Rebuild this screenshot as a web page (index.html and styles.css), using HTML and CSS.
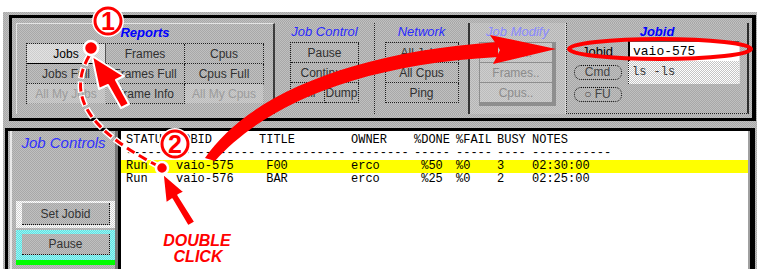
FILE: index.html
```html
<!DOCTYPE html>
<html lang="en">
<head>
    <meta charset="UTF-8">
    <meta name="viewport" content="width=device-width, initial-scale=1.0">
    <title>Rush Jobs - double click a jobid</title>
    <link rel="stylesheet" href="styles.css">
</head>
<body>
<div class="page">
    <div class="window">
        <div class="toolbar">
            <div class="group reports">
                <h3 class="title strong">Reports</h3>
                <div class="grid cols3">
                    <button class="btn on">Jobs</button>
                    <button class="btn">Frames</button>
                    <button class="btn">Cpus</button>
                    <button class="btn">Jobs Full</button>
                    <button class="btn">Frames Full</button>
                    <button class="btn">Cpus Full</button>
                    <button class="btn off">All My Jobs</button>
                    <button class="btn">Frame Info</button>
                    <button class="btn off">All My Cpus</button>
                </div>
            </div>
            <div class="group jobctl">
                <h3 class="title">Job Control</h3>
                <div class="grid cols2">
                    <button class="btn span2">Pause</button>
                    <button class="btn span2">Continue</button>
                    <button class="btn">Kill</button>
                    <button class="btn">Dump</button>
                </div>
            </div>
            <div class="group network">
                <h3 class="title">Network</h3>
                <div class="grid cols1">
                    <button class="btn">All Jobs</button>
                    <button class="btn">All Cpus</button>
                    <button class="btn">Ping</button>
                </div>
            </div>
            <div class="group jobmodify">
                <h3 class="title faint">Job Modify</h3>
                <div class="grid cols1 dim">
                    <button class="btn">Jobs..</button>
                    <button class="btn">Frames..</button>
                    <button class="btn">Cpus..</button>
                </div>
            </div>
            <div class="group jobid">
                <h3 class="title strong">Jobid</h3>
                <div class="jobid-form">
                    <span class="label">Jobid</span>
                    <span class="field">vaio-575</span>
                    <span class="pill">Cmd</span>
                    <span class="field cmd">ls -ls</span>
                    <span class="pill">&#9675; FU</span>
                    <span></span>
                </div>
            </div>
        </div>

        <div class="main">
            <div class="side">
                <h3 class="side-title">Job Controls</h3>
                <div class="slot light"><button class="sbtn">Set Jobid</button></div>
                <div class="slot cyan"><button class="sbtn">Pause</button></div>
                <div class="slot green"></div>
            </div>
            <div class="list">
                <div class="row"><span>STATUS</span><span>JOBID</span><span>TITLE</span><span>OWNER</span><span>%DONE</span><span>%FAIL</span><span>BUSY</span><span>NOTES</span></div>
                <div class="row"><span>------</span><span>-----------</span><span>------------</span><span>--------</span><span>-----</span><span>-----</span><span>----</span><span>-----------</span></div>
                <div class="row sel"><span>Run</span><span>vaio-575</span><span> F00</span><span>erco</span><span> %50</span><span>%0</span><span>3</span><span>02:30:00</span></div>
                <div class="row"><span>Run</span><span>vaio-576</span><span> BAR</span><span>erco</span><span> %25</span><span>%0</span><span>2</span><span>02:25:00</span></div>
            </div>
        </div>
    </div>

    <!-- red tutorial marks drawn over the screenshot -->
    <svg class="marks" width="762" height="269" viewBox="0 0 762 269">
        <path d="M89,56 C64,100 96,134 160,167" fill="none" stroke="#fff" stroke-width="6" stroke-dasharray="11 3" stroke-dashoffset="1"/>
        <path d="M89,56 C64,100 96,134 160,167" fill="none" stroke="#f00" stroke-width="3" stroke-dasharray="9 5"/>

        <path d="M205,158 C245,100 340,53 498,42 L498,57 C352,65 262,108 215,161 Z" fill="#f00"/>
        <polygon points="490,35 556,49 493,64 500,50" fill="#f00"/>

        <ellipse cx="660" cy="49" rx="91" ry="10" fill="none" stroke="#f00" stroke-width="4"/>

        <circle cx="91" cy="48" r="7" fill="#f00" stroke="#fff" stroke-width="2.5"/>
        <circle cx="162" cy="168" r="6" fill="#f00" stroke="#fff" stroke-width="2.5"/>

        <polygon points="92,56 124,76 116,80 129,104 121,108 108,85 99,89" fill="#f00" stroke="#fff" stroke-width="2" stroke-linejoin="round"/>
        <polygon points="163,174 184,192 178,195 195,222 188,226 172,199 166,203" fill="#f00" stroke="#fff" stroke-width="1.5" stroke-linejoin="round"/>

        <circle cx="108" cy="21" r="13" fill="#fff" stroke="#fff" stroke-width="6"/>
        <circle cx="108" cy="21" r="13" fill="#fff" stroke="#f00" stroke-width="3"/>
        <text class="num" x="108" y="30">1</text>

        <circle cx="175" cy="144" r="13" fill="#fff" stroke="#fff" stroke-width="6"/>
        <circle cx="175" cy="144" r="13" fill="#fff" stroke="#f00" stroke-width="3"/>
        <text class="num" x="175" y="153">2</text>

        <text class="dbl" x="197" y="246">DOUBLE</text>
        <text class="dbl" x="198" y="262">CLICK</text>
    </svg>
</div>
</body>
</html>
```

FILE: styles.css
```css
body {
    margin: 0;
    background: #fff;
    font-family: "Liberation Sans", Arial, sans-serif;
}
.page {
    position: relative;
    width: 762px;
    height: 269px;
    overflow: hidden;
}

/* dithered motif grey, like the old X11 app */
.window,
.group,
.btn,
.sbtn {
    background: repeating-conic-gradient(#a8a8a8 0 25%, #c0c0c0 0 50%) 0 0 / 2px 2px;
}
.window {
    margin: 12px 0 0 3px;
    width: 754px;
    height: 257px;
    display: flex;
    flex-direction: column;
}

/* top toolbar */
.toolbar {
    margin: 3px 1px 0 6px;
    border: 3px solid #000;
    border-right-width: 4px;
    padding: 5px 3px 4px 4px;
    height: 91px;
    display: flex;
}
.group {
    box-sizing: border-box;
    height: 91px;
    display: flex;
    flex-direction: column;
    align-items: center;
}
.reports {
    width: 259px;
    border-left: 1px solid #e4e4e4;
    border-top: 1px solid #e4e4e4;
    border-right: 2px solid #3c3c3c;
}
.jobctl {
    width: 100px;
    border-right: 1px dotted #222;
}
.network {
    width: 95px;
    border-right: 2px solid #333;
}
.jobmodify {
    width: 96px;
    background: repeating-conic-gradient(#b4b4b4 0 25%, #cacaca 0 50%) 0 0 / 2px 2px;
    border-right: 1px solid #d8d8d8;
}
.jobid {
    width: 183px;
    border-left: 1px dotted #222;
    border-bottom: 1px dotted #222;
    border-right: 2px solid #2c2c2c;
}
.title {
    margin: 0;
    height: 19px;
    font: italic 13px/18px "Liberation Sans", Arial, sans-serif;
    color: #2a2aff;
}
.title.strong {
    font-weight: bold;
    color: #0000ff;
}
.title.faint {
    color: #8a8aff;
}

.grid {
    display: grid;
    border-top: 1px dotted #1c1c1c;
    border-left: 1px dotted #1c1c1c;
}
.cols3 { grid-template-columns: repeat(3, 79px); }
.cols2 { grid-template-columns: repeat(2, 34px); }
.cols1 { grid-template-columns: 73px; }
.span2 { grid-column: span 2; }

.btn {
    height: 20px;
    margin: 0;
    padding: 0;
    border: 0;
    border-right: 1px dotted #1c1c1c;
    border-bottom: 1px dotted #1c1c1c;
    font: 12px "Liberation Sans", Arial, sans-serif;
    color: #303030;
    white-space: nowrap;
    overflow: hidden;
}
.btn.on {
    background: repeating-conic-gradient(#cdcdcd 0 25%, #e2e2e2 0 50%) 0 0 / 2px 2px;
    border-right: 1px solid #555;
    border-bottom: 1px solid #000;
    color: #000;
}
.btn.off {
    background: repeating-conic-gradient(#bababa 0 25%, #cdcdcd 0 50%) 0 0 / 2px 2px;
    border-color: #9a9a9a;
    color: #9c9c9c;
}
.dim {
    border-color: #8e8e8e;
    border-style: solid;
}
.dim .btn {
    background: repeating-conic-gradient(#bcbcbc 0 25%, #cecece 0 50%) 0 0 / 2px 2px;
    border-color: #8e8e8e;
    border-style: solid;
    color: #8c8c8c;
}

/* jobid entry */
.jobid-form {
    display: grid;
    grid-template-columns: 61px 112px;
    grid-template-rows: 20px 23px 20px;
    align-self: stretch;
    margin-top: -1px;
}
.label {
    align-self: center;
    text-align: center;
    font-size: 13px;
    color: #000;
}
.field {
    box-sizing: border-box;
    background: #fff;
    border-left: 2px solid #000;
    border-top: 1px solid #555;
    border-right: 1px solid #ddd;
    padding-left: 3px;
    font: 13px/19px "Liberation Mono", "Courier New", monospace;
    color: #000;
}
.field.cmd {
    background: repeating-conic-gradient(#c4c4c4 0 25%, #fff 0 50%) 0 0 / 2px 2px;
    border-left: 1px dotted #222;
    border-top: 0;
    font-size: 12px;
    line-height: 22px;
    color: #3a3a3a;
}
.pill {
    align-self: center;
    justify-self: center;
    box-sizing: border-box;
    width: 48px;
    height: 15px;
    border: 1px dotted #111;
    border-radius: 7px;
    text-align: center;
    font-size: 12px;
    line-height: 13px;
    color: #444;
}

/* lower part: job controls and the jobs list */
.main {
    margin: 7px 2px 0 2px;
    border: 3px solid #000;
    border-right-width: 5px;
    border-bottom: 0;
    flex: 1;
    display: flex;
    min-height: 0;
}
.side {
    width: 103px;
    margin-left: 2px;
    border-left: 2px solid #e8e8e8;
    border-right: 3px solid #777;
    padding-top: 3px;
}
.side-title {
    margin: 0;
    text-align: center;
    font: italic 15px/17px "Liberation Sans", Arial, sans-serif;
    color: #3030ff;
}
.slot {
    width: 99px;
    margin-left: 4px;
    box-sizing: border-box;
}
.slot.light {
    margin-top: 50px;
    padding: 2px 5px 3px 6px;
    background: repeating-conic-gradient(#d2d2d2 0 25%, #fff 0 50%) 0 0 / 2px 2px;
}
.slot.cyan {
    margin-top: 2px;
    padding: 4px 5px 5px 6px;
    background: repeating-conic-gradient(#5ee0e0 0 25%, #9cf4f4 0 50%) 0 0 / 2px 2px;
}
.slot.green {
    height: 5px;
    background: #00ff00;
}
.sbtn {
    display: block;
    width: 88px;
    height: 22px;
    margin: 0;
    padding: 0;
    border: 0;
    border-right: 1px dotted #111;
    border-bottom: 1px dotted #111;
    font: 12px "Liberation Sans", Arial, sans-serif;
    color: #333;
}
.cyan .sbtn {
    height: 21px;
}

.list {
    flex: 1;
    background: #fff;
    border-left: 3px solid #000;
    border-right: 2px solid #a0a0a0;
    padding-top: 3px;
}
.row {
    display: grid;
    grid-template-columns: 50px 83px 92px 63px 42px 41px 35px 1fr;
    padding-left: 5px;
    height: 13px;
    font: 12px/13px "Liberation Mono", "Courier New", monospace;
    color: #000;
    white-space: pre;
}
.row.sel {
    background: #ffff00;
}

/* overlay marks */
.marks {
    position: absolute;
    left: 0;
    top: 0;
    pointer-events: none;
}
.num {
    font: bold 25px "Liberation Sans", Arial, sans-serif;
    fill: #f00;
    text-anchor: middle;
}
.dbl {
    font: italic bold 16px "Liberation Sans", Arial, sans-serif;
    fill: #f00;
    text-anchor: middle;
}
```
